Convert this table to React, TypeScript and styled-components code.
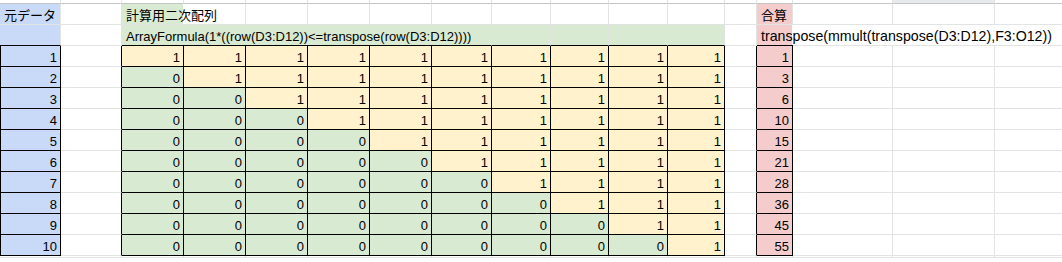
import styled, { createGlobalStyle } from 'styled-components';

const GRID = '#e2e3e3';
const BLUE = '#c9daf8';
const GREEN = '#d9ead3';
const YELLOW = '#fff2cc';
const RED = '#f4cccc';

const COLS = [61, 61, 62, 62, 62, 62, 62, 60, 59, 58, 59, 57, 32, 36, 100, 102, 120];
const SUMS = [1, 3, 6, 10, 15, 21, 28, 36, 45, 55];

const GlobalStyle = createGlobalStyle`
  html, body {
    margin: 0;
    padding: 0;
    background: #fff;
    overflow: hidden;
  }
`;

const Sheet = styled.div`
  display: grid;
  grid-template-columns: ${COLS.map((w) => `${w}px`).join(' ')};
  grid-template-rows: 4px repeat(12, 21px);
  font-family: 'Liberation Sans', 'Noto Sans CJK JP', sans-serif;
  font-size: 13px;
  line-height: 15px;
  color: #000;
`;

const TopCell = styled.div<{ $shade?: boolean }>`
  box-sizing: border-box;
  background: ${(p) => (p.$shade ? '#e8eaed' : '#fff')};
  border-right: 1px solid ${GRID};
  border-bottom: 1px solid #c4c7c5;
`;

const Cell = styled.div<{
  $fill?: string;
  $num?: boolean;
  $r?: boolean;
  $b?: boolean;
  $l?: boolean;
  $span?: number;
}>`
  box-sizing: border-box;
  min-width: 0;
  display: flex;
  align-items: flex-end;
  justify-content: ${(p) => (p.$num ? 'flex-end' : 'flex-start')};
  padding: 0 3px 1px 4px;
  grid-column: span ${(p) => p.$span ?? 1};
  background: ${(p) => p.$fill ?? '#fff'};
  border-right: 1px solid ${(p) => (p.$r ? '#000' : GRID)};
  border-bottom: 1px solid ${(p) => (p.$b ? '#000' : GRID)};
  border-left: ${(p) => (p.$l ? '1px solid #000' : '0')};
  white-space: nowrap;
  overflow: hidden;
`;

/* formula text that runs over empty neighbours, only the first column is coloured */
const SpillCell = styled.div<{ $fill: string; $width: number; $span: number }>`
  box-sizing: border-box;
  min-width: 0;
  display: flex;
  align-items: flex-end;
  padding: 0 3px 2px 4px;
  grid-column: span ${(p) => p.$span};
  border-right: 1px solid ${GRID};
  font-size: 14.2px;
  background:
    linear-gradient(#000, #000) left bottom / ${(p) => p.$width}px 1px no-repeat,
    linear-gradient(${GRID}, ${GRID}) left bottom / 100% 1px no-repeat,
    linear-gradient(to right, ${(p) => p.$fill} ${(p) => p.$width - 1}px, #fff ${(p) => p.$width - 1}px);
  white-space: nowrap;
  overflow: hidden;
`;

const TitleCell = styled(Cell)`
  background: linear-gradient(to right, ${GREEN} 61px, #fff 61px);
`;

const Blank = ({ n, r, b }: { n: number; r?: boolean; b?: boolean }) => (
  <>
    {Array.from({ length: n }, (_, i) => (
      <Cell key={i} $r={r} $b={b} />
    ))}
  </>
);

export default function App() {
  return (
    <>
      <GlobalStyle />
      <Sheet>
        {COLS.map((_, i) => (
          <TopCell key={`t${i}`} $shade={i === 15} />
        ))}

        {/* row 1 */}
        <Cell $fill={BLUE}>元データ</Cell>
        <Cell />
        <TitleCell $span={2}>計算用二次配列</TitleCell>
        <Blank n={8} />
        <Cell />
        <Cell $fill={RED}>合算</Cell>
        <Blank n={3} />

        {/* row 2 */}
        <Cell $fill={BLUE} $b />
        <Cell />
        <Cell $fill={GREEN} $span={6} $b>
          ArrayFormula(1*((row(D3:D12))&lt;=transpose(row(D3:D12))))
        </Cell>
        {[0, 1, 2, 3].map((i) => (
          <Cell key={`g${i}`} $fill={GREEN} $b />
        ))}
        <Cell />
        <SpillCell $fill={RED} $width={36} $span={4}>
          transpose(mmult(transpose(D3:D12),F3:O12))
        </SpillCell>

        {/* data rows */}
        {SUMS.map((sum, i) => (
          <Row key={`r${i}`} i={i} sum={sum} />
        ))}

        {/* trailing empty row */}
        <Blank n={COLS.length} />
      </Sheet>
    </>
  );
}

function Row({ i, sum }: { i: number; sum: number }) {
  return (
    <>
      <Cell $fill={BLUE} $num $l $r $b>
        {i + 1}
      </Cell>
      <Cell $r />
      {Array.from({ length: 10 }, (_, j) => {
        const v = i <= j ? 1 : 0;
        return (
          <Cell key={j} $fill={v ? YELLOW : GREEN} $num $r $b>
            {v}
          </Cell>
        );
      })}
      <Cell $r />
      <Cell $fill={RED} $num $r $b>
        {sum}
      </Cell>
      <Blank n={3} />
    </>
  );
}
